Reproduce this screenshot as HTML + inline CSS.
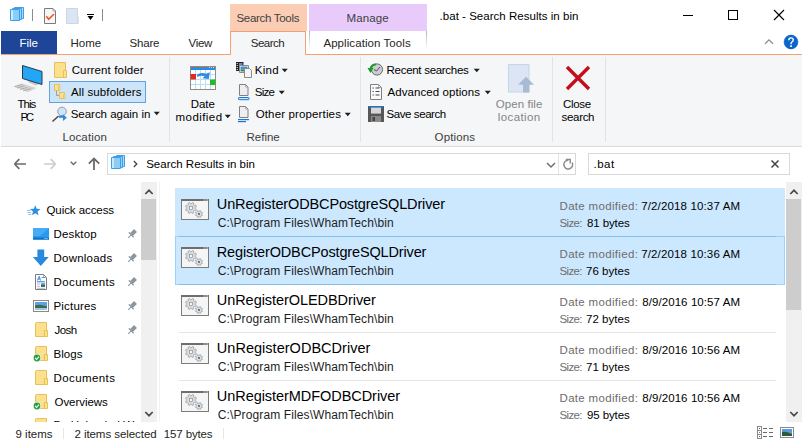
<!DOCTYPE html>
<html><head><meta charset="utf-8">
<style>
*{margin:0;padding:0;box-sizing:border-box}
html,body{width:803px;height:446px;overflow:hidden;background:#fff}
body{position:relative;font-family:"Liberation Sans",sans-serif;font-size:12px;color:#000}
.a{position:absolute;white-space:nowrap}
svg{position:absolute;overflow:visible}
.t{position:absolute;white-space:nowrap;line-height:1}
</style></head><body>

<!-- ===== Title bar ===== -->
<svg style="left:0;top:0" width="803" height="31">
  <!-- stacked folder icon -->
  <path d="M14.5 7.5 H23.5 V18.5 H14.5 Z" fill="#a9dcfb" stroke="#3e9fe8" stroke-width="1"/>
  <path d="M12.5 8.5 H21.5 V19.5 H12.5 Z" fill="#9ad4fa" stroke="#3e9fe8" stroke-width="1"/>
  <path d="M10.5 9.5 H19.5 V20.5 H10.5 Z" fill="#8ccdf8" stroke="#3e9fe8" stroke-width="1"/>
  <rect x="11" y="10" width="2" height="10" fill="#c8eafd"/>
  <rect x="32" y="9" width="1" height="12" fill="#8a8a8a"/>
  <!-- check doc -->
  <path d="M44.5 8.5 H53 L55.5 11 V23.5 H44.5 Z" fill="#f6f6f6" stroke="#7a7a7a" stroke-width="1"/>
  <path d="M53 8.5 V11 H55.5" fill="none" stroke="#9a9a9a" stroke-width="0.8"/>
  <path d="M46.3 16.2 L48.7 19.2 L54 14" fill="none" stroke="#ea5a20" stroke-width="1.6"/>
  <!-- light doc -->
  <path d="M66.5 8.5 H77.5 V23.5 H66.5 Z" fill="#dce5f3" stroke="#c9d6ea" stroke-width="1"/>
  <path d="M77.5 17 H78.5 V23.5 H77.5 Z" fill="#dce5f3" stroke="#c9d6ea" stroke-width="0.6"/>
  <!-- dropdown -->
  <rect x="87" y="14" width="7" height="1" fill="#000"/>
  <path d="M87.5 16 H93.5 L90.5 20 Z" fill="#000"/>
  <rect x="102" y="9" width="1" height="12" fill="#8a8a8a"/>
  <!-- window controls -->
  <rect x="683" y="15" width="10" height="1" fill="#000"/>
  <rect x="728.5" y="10.5" width="9" height="9" fill="none" stroke="#000" stroke-width="1"/>
  <path d="M774 10 L784 20 M784 10 L774 20" stroke="#000" stroke-width="1.15"/>
</svg>
<div class="a" style="left:230px;top:4px;width:77px;height:27px;background:#fccdb5"></div>
<div class="a" style="left:309px;top:4px;width:118px;height:27px;background:#e8cbfa"></div>

<!-- ===== Tabs row ===== -->
<div class="a" style="left:1px;top:31px;width:56px;height:23px;background:#1f4598"></div>
<div class="a" style="left:1px;top:54px;width:801px;height:1px;background:#f6a070"></div>
<div class="a" style="left:230px;top:31px;width:76px;height:24px;background:#f5f6f7;border:1px solid #f6a070;border-bottom:none"></div>
<div class="a" style="left:309px;top:31px;width:1px;height:19px;background:linear-gradient(#b4b4b4,#fff)"></div><div class="a" style="left:426px;top:31px;width:1px;height:19px;background:linear-gradient(#b4b4b4,#fff)"></div>
<!-- help / collapse -->
<svg style="left:0;top:0" width="803" height="55">
  <path d="M765 43.7 L769 39.9 L773 43.7" fill="none" stroke="#8c8c8c" stroke-width="1.3"/>
  <circle cx="791" cy="42" r="6.9" fill="#0a66cc" stroke="#0756ad" stroke-width="0.6"/>
  <path d="M788.8 40.2 Q788.8 37.9 791 37.9 Q793.2 37.9 793.2 39.9 Q793.2 41.3 791.9 42 Q791 42.6 791 44.2" fill="none" stroke="#fff" stroke-width="1.4"/>
  <rect x="790.2" y="45.3" width="1.7" height="1.7" fill="#fff"/>
</svg>

<!-- ===== Ribbon ===== -->
<div class="a" style="left:1px;top:55px;width:801px;height:91px;background:#f5f6f7"></div>
<div class="a" style="left:1px;top:146px;width:801px;height:1px;background:#dadbdc"></div>
<!-- separators -->
<div class="a" style="left:169px;top:57px;width:1px;height:85px;background:#e2e3e4"></div>
<div class="a" style="left:360px;top:57px;width:1px;height:85px;background:#e2e3e4"></div>
<div class="a" style="left:552px;top:57px;width:1px;height:85px;background:#e2e3e4"></div>
<div class="a" style="left:605px;top:57px;width:1px;height:85px;background:#e2e3e4"></div>

<!-- Location group -->
<svg style="left:0;top:0" width="803" height="147">
  <!-- This PC -->
  <path d="M13 86.5 L22 83.5 L36.5 88 L28 92 Z" fill="#d2d2d2"/>
  <path d="M15 86.5 L22 84.5 M17 88 L24 86 M20 89.5 L27 87.5 M23 91 L31 88.5" stroke="#a6a6a6" stroke-width="0.8"/>
  <path d="M27.5 82 L31 80.5 L40 83.5 L36 85.5 Z" fill="#c4c4c4"/>
  <path d="M22.5 65.5 L42 71.5 V84.5 L22.5 78.5 Z" fill="#22a6f6" stroke="#2d3a44" stroke-width="1"/>
  <!-- current folder -->
  <path d="M54.5 62.5 H65.5 V77.5 H54.5 Z" fill="#fbe08e" stroke="#e6c15a" stroke-width="1"/>
  <path d="M63.5 70.5 H66.5 V77.5 H63.5 Z" fill="#fbe08e" stroke="#e6c15a" stroke-width="1"/>
  <!-- selected all subfolders -->
  <rect x="49.5" y="81.5" width="96" height="21" fill="#cce4f7" stroke="#62a3e4" stroke-width="1"/>
  <path d="M56.5 91 V95.5 H59" fill="none" stroke="#a0a0a0" stroke-width="1"/>
  <path d="M54.5 84.5 H59.5 V90.5 H54.5 Z" fill="#fbe08e" stroke="#e6c15a" stroke-width="1"/>
  <path d="M58.5 86.5 H60 V90.5 H58.5 Z" fill="#fbe08e" stroke="#e6c15a" stroke-width="0.8"/>
  <path d="M59.5 92.5 H64.5 V98.5 H59.5 Z" fill="#fbe08e" stroke="#e6c15a" stroke-width="1"/>
  <path d="M63.5 94.5 H65 V98.5 H63.5 Z" fill="#fbe08e" stroke="#e6c15a" stroke-width="0.8"/>
  <!-- search again -->
  <path d="M58 116.5 L53 121" stroke="#4a4a4a" stroke-width="1.6" stroke-linecap="round"/>
  <circle cx="62" cy="111.5" r="4.3" fill="#cfe5f7" stroke="#8e9ca8" stroke-width="1"/>
  <path d="M59 116.7 H63.5" stroke="#2b8ad9" stroke-width="2.2"/>
  <path d="M63 114.2 L66.8 117.7 L63 121 Z" fill="#2b8ad9"/>
  <path d="M153.7 111.7 H159.8 L156.75 115.2 Z" fill="#1e1e1e"/>
</svg>

<!-- Refine group -->
<svg style="left:0;top:0" width="803" height="147">
  <rect x="190.5" y="66.5" width="25" height="23" fill="#fff" stroke="#8c8c8c" stroke-width="1"/>
  <rect x="191" y="67" width="24" height="1.2" fill="#7a7a7a"/><path d="M209 67.6 H210 M211 67.6 H212 M213 67.6 H214" stroke="#fff" stroke-width="0.8"/>
  <rect x="191" y="68" width="24" height="2" fill="#1e8ef0"/>
  <path d="M191 74.5 H215 M191 79.5 H215 M191 84.5 H215 M195.5 70 V89 M200.5 70 V89 M205.5 70 V89 M210.5 70 V89" stroke="#bcdcf4" stroke-width="1"/>
  <rect x="190.5" y="74" width="5.5" height="5.5" fill="#e22c1c"/>
  <rect x="210" y="79.5" width="5.5" height="5.5" fill="#24bb2a"/>
  <path d="M196.8 74.8 Q201 71.6 206.2 73.8 L209.8 72.2 L208.8 78.9 L202.3 78.3 L204.8 76.3 Q201 74.9 197.4 77 Z" fill="#2f8ae0"/>
  <path d="M224.7 114.7 H230.8 L227.75 118.2 Z" fill="#1e1e1e"/>
  <!-- kind -->
  <rect x="236" y="62" width="7.5" height="9" fill="#222"/>
  <path d="M237.2 63 V70.5" stroke="#fff" stroke-width="1" stroke-dasharray="1 1"/>
  <rect x="239" y="63" width="3.5" height="3" fill="#5a8ad0"/>
  <path d="M239.5 65.5 H248.5 V72.5 H239.5 Z" fill="#fff" stroke="#8a8a8a" stroke-width="1"/>
  <rect x="240.5" y="66.5" width="7" height="3" fill="#3a8ed8"/>
  <rect x="240.5" y="69.5" width="7" height="2" fill="#4a7a5a"/>
  <path d="M244.5 68.5 H249.5 L251.5 70.5 V77.5 H244.5 Z" fill="#f4f4f4" stroke="#8a8a8a" stroke-width="1"/>
  <path d="M281.7 68.7 H287.8 L284.75 72.2 Z" fill="#1e1e1e"/>
  <!-- size -->
  <path d="M239.5 84.5 H245.5 L248 87 V95.5 H239.5 Z" fill="#eeeeee" stroke="#808080" stroke-width="1"/>
  <path d="M245.5 84.5 V87 H248" fill="none" stroke="#a0a0a0" stroke-width="0.8"/>
  <rect x="238.5" y="97.5" width="10.5" height="2.2" rx="0.6" fill="#cfe4f8" stroke="#1a78d4" stroke-width="1"/>
  <path d="M278.7 90.7 H284.8 L281.75 94.2 Z" fill="#1e1e1e"/>
  <!-- other properties -->
  <path d="M239.5 106.5 H245.5 L248 109 V117.5 H239.5 Z" fill="#eeeeee" stroke="#808080" stroke-width="1"/>
  <path d="M245.5 106.5 V109 H248" fill="none" stroke="#a0a0a0" stroke-width="0.8"/>
  <rect x="238" y="119" width="11" height="1.2" fill="#1a78d4"/>
  <rect x="238" y="121" width="8" height="1.2" fill="#1a78d4"/>
  <path d="M344.7 112.7 H350.8 L347.75 116.2 Z" fill="#1e1e1e"/>
</svg>

<!-- Options group -->
<svg style="left:0;top:0" width="803" height="147">
  <circle cx="377" cy="69.5" r="5.6" fill="#c9cdd2" stroke="#6a6a6a" stroke-width="1"/>
  <path d="M374 69.5 L376.5 71 L380 67" stroke="#444" stroke-width="0.9" fill="none"/>
  <path d="M376 64.5 A5 5 0 0 0 370.5 69" stroke="#1d9a2c" stroke-width="2" fill="none"/>
  <path d="M367.5 68 L373.5 68 L370.5 73 Z" fill="#1d9a2c"/>
  <path d="M473.7 68.7 H479.8 L476.75 72.2 Z" fill="#1e1e1e"/>
  <path d="M370.5 84.5 H378.5 L381.5 87.5 V99.5 H370.5 Z" fill="#fafafa" stroke="#808080" stroke-width="1"/>
  <path d="M378.5 84.5 V87.5 H381.5" fill="none" stroke="#a0a0a0" stroke-width="0.8"/>
  <path d="M372.5 88 H373.8 M375.5 88 H379.5 M372.5 91.5 H373.8 M375.5 91.5 H379.5 M372.5 95 H373.8 M375.5 95 H379.5" stroke="#4a4a4a" stroke-width="1"/>
  <path d="M484.7 90.7 H490.8 L487.75 94.2 Z" fill="#1e1e1e"/>
  <rect x="368" y="106" width="16" height="16" rx="0.5" fill="#575757"/>
  <rect x="369" y="106" width="14" height="1.6" fill="#1f74d0"/>
  <rect x="371" y="107.6" width="10" height="6" fill="#d6d6d6"/>
  <rect x="371" y="116" width="10" height="6" fill="#8a8a8a"/>
  <rect x="372.5" y="117" width="2.5" height="4" fill="#444"/>
  <!-- open file location -->
  <rect x="508.5" y="64.5" width="20.5" height="27.5" fill="#dbe5f3" stroke="#c6d5ea" stroke-width="1"/>
  <path d="M523 92.5 V84.8 H518 L526 76.7 L534 84.8 H529.3 V92.5 Z" fill="#a9bad3"/>
  <!-- close search -->
  <path d="M567 67 L589 89 M589 67 L567 89" stroke="#c30f1c" stroke-width="3.4"/>
</svg>

<!-- ===== Address row ===== -->
<svg style="left:0;top:0" width="803" height="180">
  <path d="M14.5 164 H26 M14.5 164 L19.3 159.2 M14.5 164 L19.3 168.8" stroke="#6a6a6a" stroke-width="1.7" fill="none"/>
  <path d="M44 164 H55.5 M55.5 164 L50.7 159.2 M55.5 164 L50.7 168.8" stroke="#cdcdcd" stroke-width="1.7" fill="none"/>
  <path d="M70.7 161.7 L73.5 164.5 L76.3 161.7" stroke="#6a6a6a" stroke-width="1.3" fill="none"/>
  <path d="M94 158.5 V170 M88.8 163.7 L94 158.5 L99.2 163.7" stroke="#6a6a6a" stroke-width="1.8" fill="none"/>
  <rect x="107.5" y="153.5" width="468" height="21" fill="#fff" stroke="#d9d9d9" stroke-width="1"/>
  <rect x="558" y="154" width="1" height="20" fill="#e3e3e3"/>
  <path d="M116.5 155.5 H124.5 V166.5 H116.5 Z" fill="#a9dcfb" stroke="#3e9fe8" stroke-width="1"/>
  <path d="M113.5 156.5 H122.5 V167.5 H113.5 Z" fill="#9ad4fa" stroke="#3e9fe8" stroke-width="1"/>
  <path d="M111.5 157.5 H120.5 V168.5 H111.5 Z" fill="#8ccdf8" stroke="#3e9fe8" stroke-width="1"/>
  <rect x="112" y="158" width="2" height="10" fill="#c8eafd"/>
  <path d="M133.8 161 L136.8 164 L133.8 167" stroke="#444" stroke-width="1.3" fill="none"/>
  <path d="M547 163 L551 167 L555 163" stroke="#707070" stroke-width="1.5" fill="none"/>
  <path d="M568.5 160.2 A4.4 4.4 0 1 0 572.2 162.6" stroke="#8a8a8a" stroke-width="1.5" fill="none"/>
  <path d="M565.8 159.4 H570.2 V163.6" stroke="#8a8a8a" stroke-width="1.4" fill="none"/>
  <rect x="588.5" y="153.5" width="201" height="21" fill="#fff" stroke="#d9d9d9" stroke-width="1"/>
  <path d="M771.5 160.5 L778.5 167.5 M778.5 160.5 L771.5 167.5" stroke="#444" stroke-width="1.5"/>
</svg>

<!-- ===== Nav pane ===== -->
<div class="a" style="left:141px;top:182px;width:16px;height:240px;background:#f0f0f0"></div>
<div class="a" style="left:159px;top:182px;width:1px;height:240px;background:#f2f2f2"></div>
<div class="a" style="left:141px;top:199px;width:15px;height:61px;background:#cdcdcd"></div>
<svg style="left:0;top:0" width="803" height="446">
  <path d="M145.3 194 L149 190.3 L152.7 194" stroke="#4a4a4a" stroke-width="1.7" fill="none"/>
  <path d="M145.3 412 L149 415.7 L152.7 412" stroke="#4a4a4a" stroke-width="1.7" fill="none"/>
</svg>
<div class="a" style="left:0;top:178px;width:141px;height:244px;overflow:hidden"><svg style="left:0;top:-178px" width="141" height="446"><path d="M35.30 205.20 L36.71 208.86 L40.63 209.07 L37.58 211.54 L38.59 215.33 L35.30 213.20 L32.01 215.33 L33.02 211.54 L29.97 209.07 L33.89 208.86 Z" fill="#2b8fe2"/><path d="M27 210.5 H30.5 M27.5 212.5 H31 M28.5 214.5 H31.5" stroke="#7db9ee" stroke-width="0.9"/><rect x="33" y="228" width="16" height="11.6" fill="#2a9af0"/><path d="M33 228 H49 L40 236 H33 Z" fill="#46aaf4"/><rect x="33" y="237.6" width="16" height="2" fill="#0f6fc4"/><path d="M44.5 238.6 H45.5 M46.5 238.6 H47.5" stroke="#fff" stroke-width="0.9"/><g transform="translate(127,229) rotate(45 5 5)" fill="#8b969d"><rect x="3" y="0" width="4" height="6"/><rect x="1.5" y="5.5" width="7" height="1.2"/><rect x="4.5" y="6.5" width="1" height="4"/></g><path d="M37.4 249.5 H44.2 V257 H48.7 L40.8 266 L32.9 257 H37.4 Z" fill="#2a88de"/><g transform="translate(127,253) rotate(45 5 5)" fill="#8b969d"><rect x="3" y="0" width="4" height="6"/><rect x="1.5" y="5.5" width="7" height="1.2"/><rect x="4.5" y="6.5" width="1" height="4"/></g><path d="M35.5 274.5 H43.5 L46.5 277.5 V289.5 H35.5 Z" fill="#fff" stroke="#7a7a7a" stroke-width="1"/><path d="M43.5 274.5 V277.5 H46.5" fill="none" stroke="#a0a0a0" stroke-width="0.8"/><path d="M37.3 280.5 L39.3 276.3 L40.5 280.5 M38 279 H40" stroke="#1f7ee0" stroke-width="0.9" fill="none"/><path d="M41.5 277.5 H44.5" stroke="#1f7ee0" stroke-width="0.8"/><rect x="37" y="281.3" width="8" height="1" fill="#1f7ee0"/><path d="M37 284 H40 M37 286.3 H40 M37 288.3 H45" stroke="#a8a8a8" stroke-width="0.8"/><rect x="41" y="283.2" width="4" height="3.6" fill="#5a90d0"/><rect x="41" y="285" width="4" height="1.8" fill="#3a6a4a"/><g transform="translate(127,277) rotate(45 5 5)" fill="#8b969d"><rect x="3" y="0" width="4" height="6"/><rect x="1.5" y="5.5" width="7" height="1.2"/><rect x="4.5" y="6.5" width="1" height="4"/></g><rect x="33.5" y="300.5" width="15" height="11" fill="#fff" stroke="#8a8a8a" stroke-width="1"/><rect x="35" y="302" width="12" height="8" fill="#5da2e6"/><path d="M35 305.5 Q40 303.5 47 306.5 V308 H35 Z" fill="#3e6a50"/><rect x="35" y="308" width="12" height="2" fill="#a6c4d8"/><g transform="translate(127,301) rotate(45 5 5)" fill="#8b969d"><rect x="3" y="0" width="4" height="6"/><rect x="1.5" y="5.5" width="7" height="1.2"/><rect x="4.5" y="6.5" width="1" height="4"/></g><path d="M35.5 323.5 Q35.5 322.5 36.5 322.5 H46.5 V336.5 H35.5 Z" fill="#fbe08e" stroke="#e6c15a" stroke-width="1"/><path d="M44.5 330.5 H47.5 V336.5 H44.5 Z" fill="#fbe08e" stroke="#e6c15a" stroke-width="1"/><g transform="translate(127,325) rotate(45 5 5)" fill="#8b969d"><rect x="3" y="0" width="4" height="6"/><rect x="1.5" y="5.5" width="7" height="1.2"/><rect x="4.5" y="6.5" width="1" height="4"/></g><path d="M35.5 347.5 Q35.5 346.5 36.5 346.5 H46.5 V360.5 H35.5 Z" fill="#fbe08e" stroke="#e6c15a" stroke-width="1"/><path d="M44.5 354.5 H47.5 V360.5 H44.5 Z" fill="#fbe08e" stroke="#e6c15a" stroke-width="1"/><circle cx="37" cy="358" r="4" fill="#fff"/><circle cx="37" cy="358" r="3.4" fill="#2aa23e"/><path d="M35.2 358 L36.6 359.5 L39 356.6" stroke="#fff" stroke-width="1.1" fill="none"/><path d="M35.5 371.5 Q35.5 370.5 36.5 370.5 H46.5 V384.5 H35.5 Z" fill="#fbe08e" stroke="#e6c15a" stroke-width="1"/><path d="M44.5 378.5 H47.5 V384.5 H44.5 Z" fill="#fbe08e" stroke="#e6c15a" stroke-width="1"/><path d="M35.5 395.5 Q35.5 394.5 36.5 394.5 H46.5 V408.5 H35.5 Z" fill="#fbe08e" stroke="#e6c15a" stroke-width="1"/><path d="M44.5 402.5 H47.5 V408.5 H44.5 Z" fill="#fbe08e" stroke="#e6c15a" stroke-width="1"/><circle cx="37" cy="406" r="4" fill="#fff"/><circle cx="37" cy="406" r="3.4" fill="#2aa23e"/><path d="M35.2 406 L36.6 407.5 L39 404.6" stroke="#fff" stroke-width="1.1" fill="none"/><path d="M35.5 419.5 Q35.5 418.5 36.5 418.5 H46.5 V432.5 H35.5 Z" fill="#fbe08e" stroke="#e6c15a" stroke-width="1"/><path d="M44.5 426.5 H47.5 V432.5 H44.5 Z" fill="#fbe08e" stroke="#e6c15a" stroke-width="1"/></svg><div style="position:absolute;left:0;top:-178px"><div class="t" style="left:46.50px;top:205px;font-size:11.5px;letter-spacing:-0.073px;color:#000">Quick access</div><div class="t" style="left:53.50px;top:229px;font-size:11.5px;letter-spacing:0.167px;color:#000">Desktop</div><div class="t" style="left:53.50px;top:253px;font-size:11.5px;letter-spacing:0.225px;color:#000">Downloads</div><div class="t" style="left:53.50px;top:277px;font-size:11.5px;letter-spacing:0.400px;color:#000">Documents</div><div class="t" style="left:53.50px;top:301px;font-size:11.5px;letter-spacing:0.186px;color:#000">Pictures</div><div class="t" style="left:54.50px;top:325px;font-size:11.5px;letter-spacing:-0.533px;color:#000">Josh</div><div class="t" style="left:53.50px;top:349px;font-size:11.5px;letter-spacing:0.050px;color:#000">Blogs</div><div class="t" style="left:53.50px;top:373px;font-size:11.5px;letter-spacing:0.412px;color:#000">Documents</div><div class="t" style="left:54.50px;top:397px;font-size:11.5px;letter-spacing:-0.050px;color:#000">Overviews</div><div class="t" style="left:53.50px;top:420px;font-size:11.5px;letter-spacing:0.000px;color:#000">Bo Uploaded Wo</div></div></div>

<!-- ===== Content ===== -->
<div class="a" style="left:786px;top:182px;width:16px;height:240px;background:#f0f0f0"></div>
<div class="a" style="left:786px;top:199px;width:15px;height:111px;background:#cdcdcd"></div>
<svg style="left:0;top:0" width="803" height="446">
  <path d="M790.3 194 L794 190.3 L797.7 194" stroke="#4a4a4a" stroke-width="1.7" fill="none"/>
  <path d="M790.3 412 L794 415.7 L797.7 412" stroke="#4a4a4a" stroke-width="1.7" fill="none"/>
</svg>
<div class="a" style="left:158px;top:178px;width:628px;height:244px;overflow:hidden"><div style="position:absolute;left:-158px;top:-178px;width:803px;height:446px"><div class="a" style="left:175px;top:188px;width:610px;height:48px;background:#cce8ff"></div><div class="a" style="left:175px;top:236px;width:610px;height:49px;background:#cce8ff;border:1px solid #99d1ff"></div><div class="a" style="left:179px;top:236px;width:597px;height:1px;background:#87bfec"></div><div class="a" style="left:179px;top:284px;width:597px;height:1px;background:#87bfec"></div><div class="a" style="left:179px;top:332px;width:597px;height:1px;background:#e5e5e5"></div><div class="a" style="left:179px;top:380px;width:597px;height:1px;background:#e5e5e5"></div><svg style="left:0;top:0" width="803" height="446"><rect x="181.5" y="199.5" width="27" height="20" fill="#f5f5f5" stroke="#7c7c7c" stroke-width="1"/><rect x="181" y="199" width="28" height="2" fill="#6e6e6e"/><path d="M203.5 200 H204.5 M205.5 200 H206.5 M207 200 H208" stroke="#fff" stroke-width="0.8"/><path d="M195.00 208.00 L194.95 208.61 L196.47 209.20 L195.72 211.02 L194.23 210.36 L193.83 210.83 L193.36 211.23 L194.02 212.72 L192.20 213.47 L191.61 211.95 L191.00 212.00 L190.39 211.95 L189.80 213.47 L187.98 212.72 L188.64 211.23 L188.17 210.83 L187.77 210.36 L186.28 211.02 L185.53 209.20 L187.05 208.61 L187.00 208.00 L187.05 207.39 L185.53 206.80 L186.28 204.98 L187.77 205.64 L188.17 205.17 L188.64 204.77 L187.98 203.28 L189.80 202.53 L190.39 204.05 L191.00 204.00 L191.61 204.05 L192.20 202.53 L194.02 203.28 L193.36 204.77 L193.83 205.17 L194.23 205.64 L195.72 204.98 L196.47 206.80 L194.95 207.39 Z" fill="#d9e0e6" stroke="#9ea5ab" stroke-width="0.8"/><rect x="189.6" y="206.6" width="2.8" height="2.8" fill="#fafafa" stroke="#8a8a8a" stroke-width="0.7"/><path d="M201.50 214.00 L201.47 214.38 L202.52 214.77 L202.03 215.94 L201.02 215.48 L200.77 215.77 L200.48 216.02 L200.94 217.03 L199.77 217.52 L199.38 216.47 L199.00 216.50 L198.62 216.47 L198.23 217.52 L197.06 217.03 L197.52 216.02 L197.23 215.77 L196.98 215.48 L195.97 215.94 L195.48 214.77 L196.53 214.38 L196.50 214.00 L196.53 213.62 L195.48 213.23 L195.97 212.06 L196.98 212.52 L197.23 212.23 L197.52 211.98 L197.06 210.97 L198.23 210.48 L198.62 211.53 L199.00 211.50 L199.38 211.53 L199.77 210.48 L200.94 210.97 L200.48 211.98 L200.77 212.23 L201.02 212.52 L202.03 212.06 L202.52 213.23 L201.47 213.62 Z" fill="#d9e0e6" stroke="#9ea5ab" stroke-width="0.7"/><rect x="198" y="213" width="2" height="2" fill="#7a7a7a"/><rect x="181.5" y="247.5" width="27" height="20" fill="#f5f5f5" stroke="#7c7c7c" stroke-width="1"/><rect x="181" y="247" width="28" height="2" fill="#6e6e6e"/><path d="M203.5 248 H204.5 M205.5 248 H206.5 M207 248 H208" stroke="#fff" stroke-width="0.8"/><path d="M195.00 256.00 L194.95 256.61 L196.47 257.20 L195.72 259.02 L194.23 258.36 L193.83 258.83 L193.36 259.23 L194.02 260.72 L192.20 261.47 L191.61 259.95 L191.00 260.00 L190.39 259.95 L189.80 261.47 L187.98 260.72 L188.64 259.23 L188.17 258.83 L187.77 258.36 L186.28 259.02 L185.53 257.20 L187.05 256.61 L187.00 256.00 L187.05 255.39 L185.53 254.80 L186.28 252.98 L187.77 253.64 L188.17 253.17 L188.64 252.77 L187.98 251.28 L189.80 250.53 L190.39 252.05 L191.00 252.00 L191.61 252.05 L192.20 250.53 L194.02 251.28 L193.36 252.77 L193.83 253.17 L194.23 253.64 L195.72 252.98 L196.47 254.80 L194.95 255.39 Z" fill="#d9e0e6" stroke="#9ea5ab" stroke-width="0.8"/><rect x="189.6" y="254.6" width="2.8" height="2.8" fill="#fafafa" stroke="#8a8a8a" stroke-width="0.7"/><path d="M201.50 262.00 L201.47 262.38 L202.52 262.77 L202.03 263.94 L201.02 263.48 L200.77 263.77 L200.48 264.02 L200.94 265.03 L199.77 265.52 L199.38 264.47 L199.00 264.50 L198.62 264.47 L198.23 265.52 L197.06 265.03 L197.52 264.02 L197.23 263.77 L196.98 263.48 L195.97 263.94 L195.48 262.77 L196.53 262.38 L196.50 262.00 L196.53 261.62 L195.48 261.23 L195.97 260.06 L196.98 260.52 L197.23 260.23 L197.52 259.98 L197.06 258.97 L198.23 258.48 L198.62 259.53 L199.00 259.50 L199.38 259.53 L199.77 258.48 L200.94 258.97 L200.48 259.98 L200.77 260.23 L201.02 260.52 L202.03 260.06 L202.52 261.23 L201.47 261.62 Z" fill="#d9e0e6" stroke="#9ea5ab" stroke-width="0.7"/><rect x="198" y="261" width="2" height="2" fill="#7a7a7a"/><rect x="181.5" y="295.5" width="27" height="20" fill="#f5f5f5" stroke="#7c7c7c" stroke-width="1"/><rect x="181" y="295" width="28" height="2" fill="#6e6e6e"/><path d="M203.5 296 H204.5 M205.5 296 H206.5 M207 296 H208" stroke="#fff" stroke-width="0.8"/><path d="M195.00 304.00 L194.95 304.61 L196.47 305.20 L195.72 307.02 L194.23 306.36 L193.83 306.83 L193.36 307.23 L194.02 308.72 L192.20 309.47 L191.61 307.95 L191.00 308.00 L190.39 307.95 L189.80 309.47 L187.98 308.72 L188.64 307.23 L188.17 306.83 L187.77 306.36 L186.28 307.02 L185.53 305.20 L187.05 304.61 L187.00 304.00 L187.05 303.39 L185.53 302.80 L186.28 300.98 L187.77 301.64 L188.17 301.17 L188.64 300.77 L187.98 299.28 L189.80 298.53 L190.39 300.05 L191.00 300.00 L191.61 300.05 L192.20 298.53 L194.02 299.28 L193.36 300.77 L193.83 301.17 L194.23 301.64 L195.72 300.98 L196.47 302.80 L194.95 303.39 Z" fill="#d9e0e6" stroke="#9ea5ab" stroke-width="0.8"/><rect x="189.6" y="302.6" width="2.8" height="2.8" fill="#fafafa" stroke="#8a8a8a" stroke-width="0.7"/><path d="M201.50 310.00 L201.47 310.38 L202.52 310.77 L202.03 311.94 L201.02 311.48 L200.77 311.77 L200.48 312.02 L200.94 313.03 L199.77 313.52 L199.38 312.47 L199.00 312.50 L198.62 312.47 L198.23 313.52 L197.06 313.03 L197.52 312.02 L197.23 311.77 L196.98 311.48 L195.97 311.94 L195.48 310.77 L196.53 310.38 L196.50 310.00 L196.53 309.62 L195.48 309.23 L195.97 308.06 L196.98 308.52 L197.23 308.23 L197.52 307.98 L197.06 306.97 L198.23 306.48 L198.62 307.53 L199.00 307.50 L199.38 307.53 L199.77 306.48 L200.94 306.97 L200.48 307.98 L200.77 308.23 L201.02 308.52 L202.03 308.06 L202.52 309.23 L201.47 309.62 Z" fill="#d9e0e6" stroke="#9ea5ab" stroke-width="0.7"/><rect x="198" y="309" width="2" height="2" fill="#7a7a7a"/><rect x="181.5" y="343.5" width="27" height="20" fill="#f5f5f5" stroke="#7c7c7c" stroke-width="1"/><rect x="181" y="343" width="28" height="2" fill="#6e6e6e"/><path d="M203.5 344 H204.5 M205.5 344 H206.5 M207 344 H208" stroke="#fff" stroke-width="0.8"/><path d="M195.00 352.00 L194.95 352.61 L196.47 353.20 L195.72 355.02 L194.23 354.36 L193.83 354.83 L193.36 355.23 L194.02 356.72 L192.20 357.47 L191.61 355.95 L191.00 356.00 L190.39 355.95 L189.80 357.47 L187.98 356.72 L188.64 355.23 L188.17 354.83 L187.77 354.36 L186.28 355.02 L185.53 353.20 L187.05 352.61 L187.00 352.00 L187.05 351.39 L185.53 350.80 L186.28 348.98 L187.77 349.64 L188.17 349.17 L188.64 348.77 L187.98 347.28 L189.80 346.53 L190.39 348.05 L191.00 348.00 L191.61 348.05 L192.20 346.53 L194.02 347.28 L193.36 348.77 L193.83 349.17 L194.23 349.64 L195.72 348.98 L196.47 350.80 L194.95 351.39 Z" fill="#d9e0e6" stroke="#9ea5ab" stroke-width="0.8"/><rect x="189.6" y="350.6" width="2.8" height="2.8" fill="#fafafa" stroke="#8a8a8a" stroke-width="0.7"/><path d="M201.50 358.00 L201.47 358.38 L202.52 358.77 L202.03 359.94 L201.02 359.48 L200.77 359.77 L200.48 360.02 L200.94 361.03 L199.77 361.52 L199.38 360.47 L199.00 360.50 L198.62 360.47 L198.23 361.52 L197.06 361.03 L197.52 360.02 L197.23 359.77 L196.98 359.48 L195.97 359.94 L195.48 358.77 L196.53 358.38 L196.50 358.00 L196.53 357.62 L195.48 357.23 L195.97 356.06 L196.98 356.52 L197.23 356.23 L197.52 355.98 L197.06 354.97 L198.23 354.48 L198.62 355.53 L199.00 355.50 L199.38 355.53 L199.77 354.48 L200.94 354.97 L200.48 355.98 L200.77 356.23 L201.02 356.52 L202.03 356.06 L202.52 357.23 L201.47 357.62 Z" fill="#d9e0e6" stroke="#9ea5ab" stroke-width="0.7"/><rect x="198" y="357" width="2" height="2" fill="#7a7a7a"/><rect x="181.5" y="391.5" width="27" height="20" fill="#f5f5f5" stroke="#7c7c7c" stroke-width="1"/><rect x="181" y="391" width="28" height="2" fill="#6e6e6e"/><path d="M203.5 392 H204.5 M205.5 392 H206.5 M207 392 H208" stroke="#fff" stroke-width="0.8"/><path d="M195.00 400.00 L194.95 400.61 L196.47 401.20 L195.72 403.02 L194.23 402.36 L193.83 402.83 L193.36 403.23 L194.02 404.72 L192.20 405.47 L191.61 403.95 L191.00 404.00 L190.39 403.95 L189.80 405.47 L187.98 404.72 L188.64 403.23 L188.17 402.83 L187.77 402.36 L186.28 403.02 L185.53 401.20 L187.05 400.61 L187.00 400.00 L187.05 399.39 L185.53 398.80 L186.28 396.98 L187.77 397.64 L188.17 397.17 L188.64 396.77 L187.98 395.28 L189.80 394.53 L190.39 396.05 L191.00 396.00 L191.61 396.05 L192.20 394.53 L194.02 395.28 L193.36 396.77 L193.83 397.17 L194.23 397.64 L195.72 396.98 L196.47 398.80 L194.95 399.39 Z" fill="#d9e0e6" stroke="#9ea5ab" stroke-width="0.8"/><rect x="189.6" y="398.6" width="2.8" height="2.8" fill="#fafafa" stroke="#8a8a8a" stroke-width="0.7"/><path d="M201.50 406.00 L201.47 406.38 L202.52 406.77 L202.03 407.94 L201.02 407.48 L200.77 407.77 L200.48 408.02 L200.94 409.03 L199.77 409.52 L199.38 408.47 L199.00 408.50 L198.62 408.47 L198.23 409.52 L197.06 409.03 L197.52 408.02 L197.23 407.77 L196.98 407.48 L195.97 407.94 L195.48 406.77 L196.53 406.38 L196.50 406.00 L196.53 405.62 L195.48 405.23 L195.97 404.06 L196.98 404.52 L197.23 404.23 L197.52 403.98 L197.06 402.97 L198.23 402.48 L198.62 403.53 L199.00 403.50 L199.38 403.53 L199.77 402.48 L200.94 402.97 L200.48 403.98 L200.77 404.23 L201.02 404.52 L202.03 404.06 L202.52 405.23 L201.47 405.62 Z" fill="#d9e0e6" stroke="#9ea5ab" stroke-width="0.7"/><rect x="198" y="405" width="2" height="2" fill="#7a7a7a"/></svg><div class="t" style="left:216.80px;top:197px;font-size:14.5px;letter-spacing:-0.131px;color:#000">UnRegisterODBCPostgreSQLDriver</div><div class="t" style="left:217.80px;top:217px;font-size:12px;letter-spacing:0.114px;color:#1e1e1e">C:\Program Files\WhamTech\bin</div><div class="t" style="left:559.50px;top:201px;font-size:11.5px;letter-spacing:0.323px;color:#6d6d6d">Date modified:</div><div class="t" style="left:641.20px;top:201px;font-size:11.5px;letter-spacing:0.144px;color:#000">7/2/2018 10:37 AM</div><div class="t" style="left:559.50px;top:218px;font-size:11.5px;letter-spacing:-0.650px;color:#6d6d6d">Size:</div><div class="t" style="left:587.00px;top:218px;font-size:11.5px;letter-spacing:-0.114px;color:#000">81 bytes</div><div class="t" style="left:216.80px;top:245px;font-size:14.5px;letter-spacing:-0.144px;color:#000">RegisterODBCPostgreSQLDriver</div><div class="t" style="left:217.80px;top:265px;font-size:12px;letter-spacing:0.114px;color:#1e1e1e">C:\Program Files\WhamTech\bin</div><div class="t" style="left:559.50px;top:249px;font-size:11.5px;letter-spacing:0.323px;color:#6d6d6d">Date modified:</div><div class="t" style="left:641.20px;top:249px;font-size:11.5px;letter-spacing:0.144px;color:#000">7/2/2018 10:36 AM</div><div class="t" style="left:559.50px;top:266px;font-size:11.5px;letter-spacing:-0.650px;color:#6d6d6d">Size:</div><div class="t" style="left:586.00px;top:266px;font-size:11.5px;letter-spacing:0.029px;color:#000">76 bytes</div><div class="t" style="left:216.80px;top:293px;font-size:14.5px;letter-spacing:-0.060px;color:#000">UnRegisterOLEDBDriver</div><div class="t" style="left:217.80px;top:313px;font-size:12px;letter-spacing:0.114px;color:#1e1e1e">C:\Program Files\WhamTech\bin</div><div class="t" style="left:559.50px;top:297px;font-size:11.5px;letter-spacing:0.323px;color:#6d6d6d">Date modified:</div><div class="t" style="left:642.20px;top:297px;font-size:11.5px;letter-spacing:0.081px;color:#000">8/9/2016 10:57 AM</div><div class="t" style="left:559.50px;top:314px;font-size:11.5px;letter-spacing:-0.650px;color:#6d6d6d">Size:</div><div class="t" style="left:586.00px;top:314px;font-size:11.5px;letter-spacing:0.029px;color:#000">72 bytes</div><div class="t" style="left:216.80px;top:341px;font-size:14.5px;letter-spacing:0.026px;color:#000">UnRegisterODBCDriver</div><div class="t" style="left:217.80px;top:361px;font-size:12px;letter-spacing:0.114px;color:#1e1e1e">C:\Program Files\WhamTech\bin</div><div class="t" style="left:559.50px;top:345px;font-size:11.5px;letter-spacing:0.323px;color:#6d6d6d">Date modified:</div><div class="t" style="left:642.20px;top:345px;font-size:11.5px;letter-spacing:0.081px;color:#000">8/9/2016 10:56 AM</div><div class="t" style="left:559.50px;top:362px;font-size:11.5px;letter-spacing:-0.650px;color:#6d6d6d">Size:</div><div class="t" style="left:586.00px;top:362px;font-size:11.5px;letter-spacing:0.029px;color:#000">71 bytes</div><div class="t" style="left:216.80px;top:389px;font-size:14.5px;letter-spacing:-0.055px;color:#000">UnRegisterMDFODBCDriver</div><div class="t" style="left:217.80px;top:409px;font-size:12px;letter-spacing:0.114px;color:#1e1e1e">C:\Program Files\WhamTech\bin</div><div class="t" style="left:559.50px;top:393px;font-size:11.5px;letter-spacing:0.323px;color:#6d6d6d">Date modified:</div><div class="t" style="left:642.20px;top:393px;font-size:11.5px;letter-spacing:0.081px;color:#000">8/9/2016 10:56 AM</div><div class="t" style="left:559.50px;top:410px;font-size:11.5px;letter-spacing:-0.650px;color:#6d6d6d">Size:</div><div class="t" style="left:587.00px;top:410px;font-size:11.5px;letter-spacing:-0.114px;color:#000">95 bytes</div></div></div>

<!-- ===== Status bar ===== -->
<div class="a" style="left:63px;top:428px;width:1px;height:11px;background:#e6e6e6"></div>
<div class="a" style="left:223px;top:428px;width:1px;height:11px;background:#e6e6e6"></div>

<svg style="left:0;top:0" width="803" height="446">
  <rect x="757.5" y="426.5" width="4" height="12" fill="#fff" stroke="#8a8a8a" stroke-width="1"/>
  <path d="M757.5 430.5 H761.5 M757.5 434.5 H761.5" stroke="#8a8a8a" stroke-width="1"/>
  <rect x="759" y="428" width="1" height="1" fill="#3a7a5a"/>
  <rect x="759" y="432" width="1" height="1" fill="#4a90f0"/>
  <rect x="759" y="436" width="1" height="1" fill="#e02020"/>
  <path d="M763 428.5 H767 M769 428.5 H773 M763 432.5 H767 M769 432.5 H773 M763 436.5 H767 M769 436.5 H773" stroke="#6a6a6a" stroke-width="1"/>
  <rect x="780.5" y="427.5" width="13" height="10" fill="#fff" stroke="#8a8a8a" stroke-width="1"/>
  <rect x="782" y="429" width="10" height="7" fill="#5a9ae0"/>
  <path d="M782 432 Q786 431 792 434 V436 H782 Z" fill="#2f5a3a"/>
</svg>
<div class="t" style="left:236.50px;top:13px;font-size:11.5px;letter-spacing:-0.300px;color:#404040">Search Tools</div>
<div class="t" style="left:346.60px;top:13px;font-size:11.5px;letter-spacing:0.120px;color:#404040">Manage</div>
<div class="t" style="left:439.60px;top:11px;font-size:11.5px;letter-spacing:0.026px;color:#000">.bat - Search Results in bin</div>
<div class="t" style="left:19.40px;top:38px;font-size:11.5px;letter-spacing:0.000px;color:#fff">File</div>
<div class="t" style="left:70.60px;top:38px;font-size:11.5px;letter-spacing:-0.067px;color:#262626">Home</div>
<div class="t" style="left:129.50px;top:38px;font-size:11.5px;letter-spacing:-0.175px;color:#262626">Share</div>
<div class="t" style="left:188.60px;top:38px;font-size:11.5px;letter-spacing:-0.300px;color:#262626">View</div>
<div class="t" style="left:250.70px;top:38px;font-size:11.5px;letter-spacing:-0.480px;color:#262626">Search</div>
<div class="t" style="left:323.40px;top:38px;font-size:11.5px;letter-spacing:0.075px;color:#262626">Application Tools</div>
<div class="t" style="left:71.70px;top:65px;font-size:11.5px;letter-spacing:0.131px;color:#000">Current folder</div>
<div class="t" style="left:71.10px;top:87px;font-size:11.5px;letter-spacing:0.108px;color:#000">All subfolders</div>
<div class="t" style="left:70.70px;top:109px;font-size:11.5px;letter-spacing:-0.021px;color:#000">Search again in</div>
<div class="t" style="left:17.40px;top:99px;font-size:11.5px;letter-spacing:-0.967px;color:#000">This</div>
<div class="t" style="left:20.50px;top:112px;font-size:11.5px;letter-spacing:-2.500px;color:#000">PC</div>
<div class="t" style="left:190.80px;top:99px;font-size:11.5px;letter-spacing:-0.100px;color:#000">Date</div>
<div class="t" style="left:175.60px;top:112px;font-size:11.5px;letter-spacing:0.429px;color:#000">modified</div>
<div class="t" style="left:254.70px;top:65px;font-size:11.5px;letter-spacing:0.333px;color:#000">Kind</div>
<div class="t" style="left:254.70px;top:87px;font-size:11.5px;letter-spacing:-0.700px;color:#000">Size</div>
<div class="t" style="left:255.70px;top:109px;font-size:11.5px;letter-spacing:0.140px;color:#000">Other properties</div>
<div class="t" style="left:386.60px;top:65px;font-size:11.5px;letter-spacing:-0.293px;color:#000">Recent searches</div>
<div class="t" style="left:387.60px;top:87px;font-size:11.5px;letter-spacing:0.067px;color:#000">Advanced options</div>
<div class="t" style="left:386.60px;top:109px;font-size:11.5px;letter-spacing:-0.430px;color:#000">Save search</div>
<div class="t" style="left:495.70px;top:99px;font-size:11.5px;letter-spacing:0.075px;color:#858585">Open file</div>
<div class="t" style="left:497.80px;top:112px;font-size:11.5px;letter-spacing:0.386px;color:#858585">location</div>
<div class="t" style="left:563.10px;top:99px;font-size:11.5px;letter-spacing:-0.350px;color:#000">Close</div>
<div class="t" style="left:561.60px;top:112px;font-size:11.5px;letter-spacing:-0.320px;color:#000">search</div>
<div class="t" style="left:62.40px;top:132px;font-size:11.5px;letter-spacing:0.143px;color:#3c3c3c">Location</div>
<div class="t" style="left:246.50px;top:132px;font-size:11.5px;letter-spacing:0.000px;color:#3c3c3c">Refine</div>
<div class="t" style="left:434.60px;top:132px;font-size:11.5px;letter-spacing:0.133px;color:#3c3c3c">Options</div>
<div class="t" style="left:146.20px;top:159px;font-size:11.5px;letter-spacing:0.005px;color:#000">Search Results in bin</div>
<div class="t" style="left:593.50px;top:159px;font-size:11.5px;letter-spacing:0.500px;color:#000">.bat</div>
<div class="t" style="left:15.50px;top:429px;font-size:11.5px;letter-spacing:0.000px;color:#1e1e1e">9 items</div>
<div class="t" style="left:74.40px;top:429px;font-size:11.5px;letter-spacing:-0.053px;color:#1e1e1e">2 items selected</div>
<div class="t" style="left:163.80px;top:429px;font-size:11.5px;letter-spacing:-0.138px;color:#1e1e1e">157 bytes</div>
</body></html>
